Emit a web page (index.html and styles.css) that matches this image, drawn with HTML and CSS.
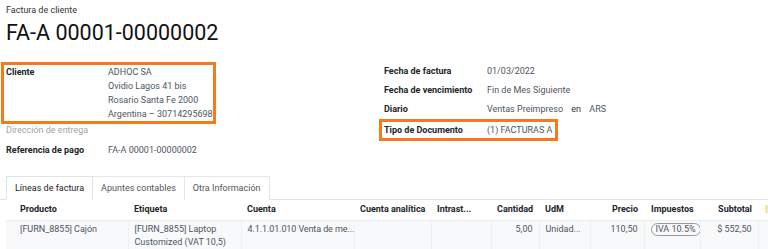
FILE: index.html
```html
<!doctype html>
<html>
<head>
<meta charset='utf-8'>
<title>Factura de cliente</title>
<link rel="stylesheet" href="styles.css">
</head>
<body>
<div class='sheet'>
  <div class='subtitle'>Factura de cliente</div>
  <h1 class='title'>FA-A 00001-00000002</h1>

  <div class='groups'>
    <div class='group left'>
      <div class='mark mark_client'>
        <div class='field'>
          <span class='label'>Cliente</span>
          <span class='value address'>
            <span>ADHOC SA</span>
            <span>Ovidio Lagos 41 bis</span>
            <span>Rosario Santa Fe 2000</span>
            <span>Argentina – 30714295698</span>
          </span>
        </div>
      </div>
      <div class='field delivery'>
        <span class='label muted'>Dirección de entrega</span>
        <span class='value'></span>
      </div>
      <div class='field payref'>
        <span class='label'>Referencia de pago</span>
        <span class='value'>FA-A 00001-00000002</span>
      </div>
    </div>

    <div class='group right'>
      <div class='field'>
        <span class='label'>Fecha de factura</span>
        <span class='value'>01/03/2022</span>
      </div>
      <div class='field'>
        <span class='label'>Fecha de vencimiento</span>
        <span class='value'>Fin de Mes Siguiente</span>
      </div>
      <div class='field'>
        <span class='label'>Diario</span>
        <span class='value'>Ventas Preimpreso <span class='en'>en</span> ARS</span>
      </div>
      <div class='mark mark_doc'>
        <div class='field'>
          <span class='label'>Tipo de Documento</span>
          <span class='value'>(1) FACTURAS A</span>
        </div>
      </div>
    </div>
  </div>

  <div class='tabs'>
    <span class='tab active'>Líneas de factura</span>
    <span class='tab'>Apuntes contables</span>
    <span class='tab'>Otra Información</span>
  </div>
</div>

<table class='lines'>
  <thead>
    <tr>
      <th class='c_prod'>Producto</th>
      <th class='c_label'>Etiqueta</th>
      <th class='c_acc'>Cuenta</th>
      <th class='c_ana'>Cuenta analítica</th>
      <th class='c_intra'>Intrast...</th>
      <th class='c_qty num'>Cantidad</th>
      <th class='c_uom'>UdM</th>
      <th class='c_price num'>Precio</th>
      <th class='c_tax'>Impuestos</th>
      <th class='c_sub num'>Subtotal</th>
      <th class='c_opt'><span class='opt'></span></th>
    </tr>
  </thead>
  <tbody>
    <tr>
      <td class='c_prod'>[FURN_8855] Cajón</td>
      <td class='c_label'>[FURN_8855] Laptop<br>Customized (VAT 10,5)</td>
      <td class='c_acc'>4.1.1.01.010 Venta de me...</td>
      <td class='c_ana'></td>
      <td class='c_intra'></td>
      <td class='c_qty num'>5,00</td>
      <td class='c_uom'>Unidad...</td>
      <td class='c_price num'>110,50</td>
      <td class='c_tax'><span class='badge'>IVA 10.5%</span></td>
      <td class='c_sub num'>$ 552,50</td>
      <td class='c_opt'></td>
    </tr>
  </tbody>
</table>
</body>
</html>
```

FILE: styles.css
```css
body {
  background: white;
  margin: 0;
  height: 249px;
  overflow: hidden;
  font-family: Roboto, "Liberation Sans", sans-serif;
  font-size: 9px;
  color: #212529;
}

.sheet {
  padding: 0 0 0 6px;
}

.subtitle {
  padding-top: 5px;
  line-height: 11px;
  color: #333;
}

.title {
  margin: 4px 0 0 0;
  font-size: 21.5px;
  font-weight: 400;
  line-height: 25px;
  color: #111;
}

/* form groups */
.groups {
  display: grid;
  grid-template-columns: 378px 1fr;
  align-items: start;
  margin-top: 17px;
}

.group {
  display: flex;
  flex-direction: column;
  align-items: flex-start;
}

.field {
  display: grid;
  grid-template-columns: 102px auto;
  line-height: 13px;
}

.group.right .field {
  grid-template-columns: 103px auto;
  padding: 3px 0;
}

.label {
  font-weight: 700;
  color: #212529;
}
.label.muted {
  font-weight: 400;
  color: #a3a3a3;
}

.value {
  color: #4e5562;
}
.value .en {
  color: #333;
  margin: 0 6px;
}

.address span {
  display: block;
  line-height: 14px;
}

.mark {
  border: 3px solid #f6791d;
  margin-left: -5px;
  padding-left: 2px;
}
.mark_client .field {
  line-height: 14px;
}
.group.right .mark_doc {
  padding-right: 3px;
}
.group.right .mark_doc .field {
  padding: 2px 0 1px 0;
}

.payref {
  margin-top: 7px;
}

/* tabs */
.tabs {
  display: flex;
  margin-top: 19px;
  margin-left: -6px;
  padding-left: 6px;
  border-bottom: 1px solid #dee2e6;
}
.tab {
  white-space: nowrap;
  border: 1px solid #e6e6e6;
  border-bottom: 0;
  margin-bottom: -1px;
  padding: 5px 8px;
  line-height: 12px;
  color: #555;
  background: white;
}
.tab + .tab {
  border-left: 0;
}
.tab.active {
  border-color: #dee2e6;
  border-bottom: 1px solid white;
  color: #222;
}

/* invoice lines */
.lines {
  border-collapse: collapse;
  width: 762px;
  margin-left: 6px;
  table-layout: fixed;
}
.lines th,
.lines td {
  box-sizing: border-box;
  white-space: nowrap;
  overflow: hidden;
}
.lines th {
  font-weight: 700;
  text-align: left;
  padding: 4px 6px 5px 6px;
  line-height: 11px;
  border-bottom: 1px solid #e9ecef;
  box-shadow: 0 2px 2px rgba(0,0,0,0.04);
}
.lines td {
  padding: 2px 6px 2px 6px;
  line-height: 13px;
  vertical-align: top;
  color: #4e5562;
  background: #f8f9fa;
  border-left: 1px solid #f0f1f2;
  height: 30px;
}
.lines td:first-child {
  border-left: 0;
}
.lines .num {
  text-align: right;
}

.c_prod { width: 122px; padding-left: 14px !important; }
.c_label { width: 113px; }
.c_acc { width: 113px; padding-right: 0 !important; }
.lines td.c_acc { overflow: visible; letter-spacing: -0.1px; }
.c_ana { width: 77px; }
.c_intra { width: 60px; }
.c_qty { width: 48px; }
.c_uom { width: 51px; }
.c_price { width: 54px; }
.c_tax { width: 56px; padding-left: 7px !important; padding-right: 0 !important; }
.c_sub { width: 58px; }
.c_opt { width: 10px; padding: 0 !important; }

.badge {
  display: inline-block;
  border: 1px solid #999;
  border-radius: 9px;
  padding: 0 4px;
  line-height: 11px;
  margin-left: -1px;
  color: #555;
}

.opt {
  display: inline-block;
  margin-left: 7px;
  width: 3px;
  height: 8px;
  background: #f7e7a0;
}
```
